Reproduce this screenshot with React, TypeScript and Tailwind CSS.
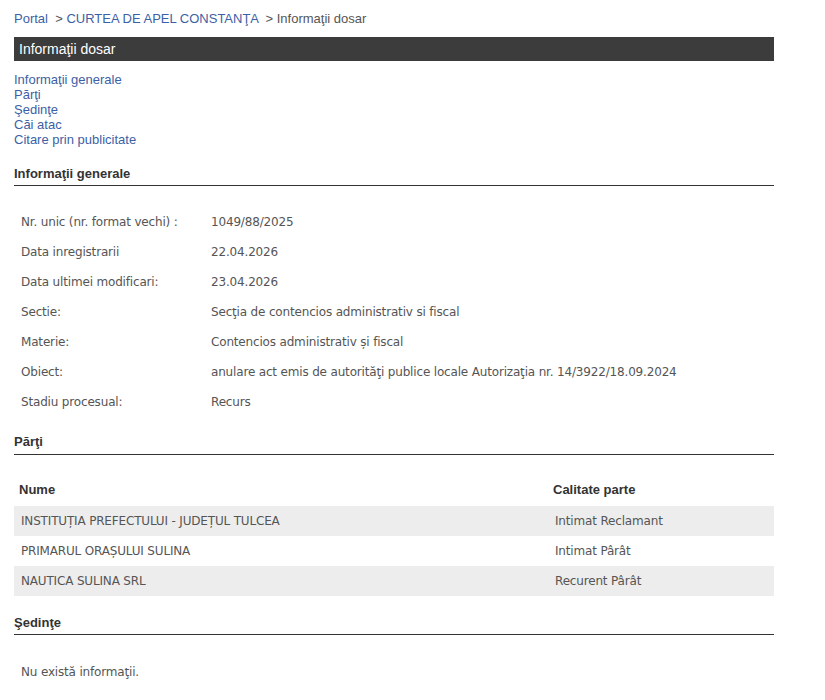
import React from "react"

const info: [string, string][] = [
  ["Nr. unic (nr. format vechi) :", "1049/88/2025"],
  ["Data inregistrarii", "22.04.2026"],
  ["Data ultimei modificari:", "23.04.2026"],
  ["Sectie:", "Secţia de contencios administrativ si fiscal"],
  ["Materie:", "Contencios administrativ și fiscal"],
  ["Obiect:", "anulare act emis de autorităţi publice locale Autorizaţia nr. 14/3922/18.09.2024"],
  ["Stadiu procesual:", "Recurs"],
]

const parti: [string, string][] = [
  ["INSTITUȚIA PREFECTULUI - JUDEȚUL TULCEA", "Intimat Reclamant"],
  ["PRIMARUL ORAȘULUI SULINA", "Intimat Pârât"],
  ["NAUTICA SULINA SRL", "Recurent Pârât"],
]

const arial = "font-['Liberation_Sans',Arial,sans-serif]"
const tahoma = "font-['DejaVu_Sans',Tahoma,sans-serif] text-[12px] tracking-[-0.17px]"

function SectionTitle({ children, className = "" }: { children: React.ReactNode; className?: string }) {
  return (
    <div className={`${arial} text-[13px] font-bold leading-[16px] text-[#333] border-b border-[#333] ${className}`}>
      {children}
    </div>
  )
}

export default function App() {
  return (
    <div className="bg-white min-h-[700px] pl-[14px]">
      <div className="w-[760px]">
        {/* breadcrumb */}
        <div className={`${arial} text-[13px] leading-[16px] pt-[11px] text-[#555]`}>
          <a className="text-[#3d5fa5]">Portal</a>
          <span> &nbsp;&gt; </span>
          <a className="text-[#3d5fa5]">CURTEA DE APEL CONSTANŢA</a>
          <span> &nbsp;&gt; Informaţii dosar</span>
        </div>

        <div className={`${arial} mt-[10px] h-[24px] bg-[#3c3c3c] text-white text-[14px] leading-[24px] pl-[5px]`}>
          Informaţii dosar
        </div>

        <div className={`${arial} mt-[11px] flex flex-col text-[13px] leading-[15px] text-[#3d5fa5]`}>
          <a>Informaţii generale</a>
          <a>Părţi</a>
          <a>Şedinţe</a>
          <a>Căi atac</a>
          <a>Citare prin publicitate</a>
        </div>

        <SectionTitle className="mt-[19px] pb-[3px]">Informaţii generale</SectionTitle>

        <div className={`${tahoma} mt-[21px] text-[#555]`}>
          {info.map(([k, v]) => (
            <div key={k} className="flex h-[30px] items-center">
              <div className="w-[197px] pl-[7px] shrink-0">{k}</div>
              <div>{v}</div>
            </div>
          ))}
        </div>

        <SectionTitle className="mt-[17px] pb-[4px]">Părţi</SectionTitle>

        <div className="mt-[19px]">
          <div className={`${arial} flex h-[32px] items-center text-[13px] font-bold text-[#333]`}>
            <div className="w-[534px] pl-[5px]">Nume</div>
            <div className="pl-[5px]">Calitate parte</div>
          </div>
          {parti.map(([n, c], i) => (
            <div key={n} className={`${tahoma} flex h-[30px] items-center text-[#555] ${i % 2 === 0 ? "bg-[#ededed]" : ""}`}>
              <div className="w-[534px] pl-[7px]">{n}</div>
              <div className="pl-[7px]">{c}</div>
            </div>
          ))}
        </div>

        <SectionTitle className="mt-[19px] pb-[3px]">Şedinţe</SectionTitle>

        <div className={`${tahoma} mt-[22px] h-[30px] flex items-center pl-[7px] text-[#555]`}>
          Nu există informaţii.
        </div>
      </div>
    </div>
  )
}
